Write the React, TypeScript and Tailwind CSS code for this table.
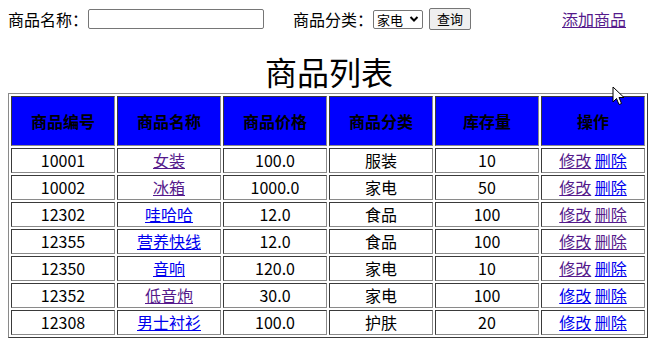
import React from "react";

type Row = {
  id: string;
  name: string;
  nameVisited: boolean;
  price: string;
  cat: string;
  stock: string;
  editVisited: boolean;
  delVisited: boolean;
};

const rows: Row[] = [
  { id: "10001", name: "女装", nameVisited: true, price: "100.0", cat: "服装", stock: "10", editVisited: true, delVisited: false },
  { id: "10002", name: "冰箱", nameVisited: true, price: "1000.0", cat: "家电", stock: "50", editVisited: true, delVisited: false },
  { id: "12302", name: "哇哈哈", nameVisited: false, price: "12.0", cat: "食品", stock: "100", editVisited: true, delVisited: true },
  { id: "12355", name: "营养快线", nameVisited: false, price: "12.0", cat: "食品", stock: "100", editVisited: true, delVisited: true },
  { id: "12350", name: "音响", nameVisited: false, price: "120.0", cat: "家电", stock: "10", editVisited: true, delVisited: false },
  { id: "12352", name: "低音炮", nameVisited: true, price: "30.0", cat: "家电", stock: "100", editVisited: false, delVisited: false },
  { id: "12308", name: "男士衬衫", nameVisited: false, price: "100.0", cat: "护肤", stock: "20", editVisited: false, delVisited: false },
];

const headers = ["商品编号", "商品名称", "商品价格", "商品分类", "库存量", "操作"];

const cellBorder =
  "border border-solid border-t-[#3a3a3a] border-l-[#3a3a3a] border-b-[#8a8a8a] border-r-[#8a8a8a]";

function Link({ visited, children }: { visited: boolean; children: React.ReactNode }) {
  return (
    <a
      href="#"
      className={
        visited
          ? "underline text-[#551a8b] decoration-[#551a8b]"
          : "underline text-[#0000ee] decoration-[#0000ee]"
      }
    >
      {children}
    </a>
  );
}

export default function App() {
  return (
    <div
      className="relative w-[657px] h-[357px] bg-white text-black overflow-hidden"
      style={{ fontFamily: '"Noto Sans CJK SC", "Noto Sans", sans-serif' }}
    >
      {/* top search bar */}
      <div className="flex items-center h-[38px] pl-2 text-[16px] leading-[20px]">
        <span className="w-[80px] whitespace-nowrap">商品名称：</span>
        <input
          type="text"
          className="w-[176px] h-[20px] border border-[#767676] bg-white rounded-[2px] outline-none"
        />
        <span className="ml-[29px] w-[80px] whitespace-nowrap">商品分类：</span>
        <div className="flex items-center justify-between w-[50px] h-[19px] border border-[#767676] rounded-[2px] bg-white pl-[3px] pr-[3px] text-[13px] leading-[17px]">
          <span>家电</span>
          <svg width="10" height="8" viewBox="0 0 10 8">
            <path d="M1.5 2 L5 5.5 L8.5 2" fill="none" stroke="#000" strokeWidth="2" />
          </svg>
        </div>
        <button className="ml-[6px] w-[42px] h-[22px] border border-[#767676] rounded-[2px] bg-[#efefef] text-[13px] leading-[18px] flex items-center justify-center">
          查询
        </button>
        <a href="#" className="ml-[91px] underline text-[#551a8b] decoration-[#551a8b] whitespace-nowrap">
          添加商品
        </a>
      </div>

      {/* title */}
      <div className="h-[55px] flex items-end justify-center">
        <h1 className="text-[32px] leading-[40px] font-normal pb-[2px] pl-[1px]">商品列表</h1>
      </div>

      {/* table */}
      <table className="ml-2 w-[640px] table-fixed border-separate border-spacing-[2px] border border-solid border-t-[#8a8a8a] border-l-[#8a8a8a] border-b-[#3a3a3a] border-r-[#3a3a3a] text-[16px]">
        <thead>
          <tr className="h-[50px]">
            {headers.map((h) => (
              <th key={h} className={`${cellBorder} bg-[#0000ff] font-bold text-black p-0 text-center`}>
                {h}
              </th>
            ))}
          </tr>
        </thead>
        <tbody>
          {rows.map((r) => (
            <tr key={r.id} className="h-[25px]">
              <td className={`${cellBorder} p-0 text-center leading-[21px]`}>{r.id}</td>
              <td className={`${cellBorder} p-0 text-center leading-[21px]`}>
                <Link visited={r.nameVisited}>{r.name}</Link>
              </td>
              <td className={`${cellBorder} p-0 text-center leading-[21px]`}>{r.price}</td>
              <td className={`${cellBorder} p-0 text-center leading-[21px]`}>{r.cat}</td>
              <td className={`${cellBorder} p-0 text-center leading-[21px]`}>{r.stock}</td>
              <td className={`${cellBorder} p-0 text-center leading-[21px]`}>
                <Link visited={r.editVisited}>修改</Link>{" "}
                <Link visited={r.delVisited}>删除</Link>
              </td>
            </tr>
          ))}
        </tbody>
      </table>

      {/* mouse cursor overlay */}
      <svg
        className="absolute left-[612px] top-[86px]"
        width="14"
        height="20"
        viewBox="0 0 14 20"
      >
        <path
          d="M1 1 L1 16 L4.5 12.5 L7 18.5 L9.5 17.5 L7 11.5 L12 11.5 Z"
          fill="#fff"
          stroke="#000"
          strokeWidth="1"
          strokeLinejoin="round"
        />
      </svg>
    </div>
  );
}
